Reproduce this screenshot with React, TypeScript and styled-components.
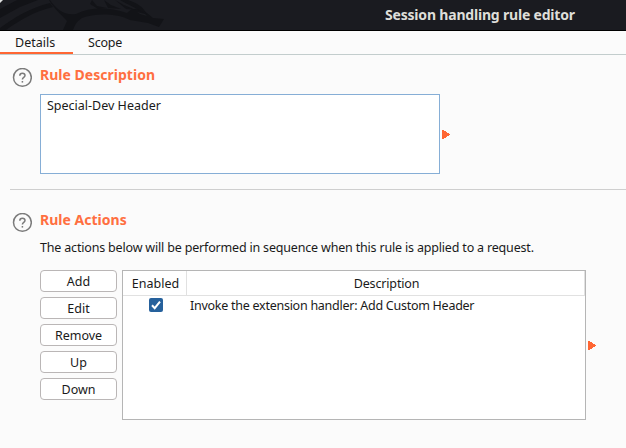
import React from "react";
import styled, { createGlobalStyle } from "styled-components";

const GlobalStyle = createGlobalStyle`
  * { box-sizing: border-box; }
  body {
    margin: 0;
    background: #fbfbfb;
    color: #1a1a1a;
    font: 12.5px/18px "Noto Sans", sans-serif;
    overflow: hidden;
  }
`;

const Window = styled.div`
  width: 626px;
  height: 448px;
  overflow: hidden;
  background: #fbfbfb;
`;

const TitleBar = styled.header`
  display: flex;
  align-items: flex-start;
  height: 31px;
  background: #1a1b20;
  border-bottom: 1px solid #000;
`;

const DragonArt = styled.svg`
  flex: none;
  display: block;
  width: 190px;
  height: 30px;
`;

const Title = styled.h1`
  margin: 5px 0 0 195px;
  font-size: 14px;
  line-height: 20px;
  font-weight: 700;
  letter-spacing: -0.19px;
  color: #deded9;
  white-space: nowrap;
`;

const Tabs = styled.nav`
  display: flex;
  height: 24px;
  border-bottom: 1px solid #c3cdcd;
`;

const Tab = styled.div<{ $active?: boolean }>`
  width: ${(p) => (p.$active ? 73 : 64)}px;
  height: 23px;
  padding: 3px 0 0 15px;
  border-bottom: 2px solid ${(p) => (p.$active ? "#ff6633" : "transparent")};
`;

const Section = styled.section<{ $first?: boolean }>`
  margin-left: 10px;
  padding-top: ${(p) => (p.$first ? 9 : 19)}px;
  height: ${(p) => (p.$first ? 135 : 258)}px;
  border-bottom: ${(p) => (p.$first ? "1px solid #cfcfcf" : "none")};
`;

const Heading = styled.div`
  display: flex;
  height: 30px;
`;

const HelpIcon = styled.svg`
  flex: none;
  width: 20px;
  height: 20px;
  margin: 4px 8px 0 2px;
`;

const HeadingText = styled.h2`
  margin: 0;
  font-size: 14px;
  line-height: 22px;
  font-weight: 700;
  letter-spacing: 0.02px;
  color: #ff6f40;
`;

const Row = styled.div`
  display: flex;
  margin-left: 30px;
`;

const DescriptionField = styled.div`
  width: 400px;
  height: 80px;
  padding: 2px 6px;
  background: #fff;
  border: 1px solid #86aed6;
`;

const Arrow = styled.svg`
  flex: none;
  align-self: center;
  width: 8px;
  height: 9px;
  margin: 1px 0 0 2px;
`;

const Text = styled.span<{ $spacing?: number }>`
  display: block;
  white-space: nowrap;
  letter-spacing: ${(p) => p.$spacing ?? 0}px;
`;

const Intro = styled.div`
  height: 31px;
  margin-left: 30px;
`;

const Buttons = styled.div`
  display: flex;
  flex-direction: column;
  gap: 5px;
  width: 77px;
  margin-right: 5px;
`;

const Button = styled.button`
  width: 77px;
  height: 22px;
  padding: 2px 0 0;
  border: 1px solid #bab6b6;
  border-radius: 4px;
  background: #fff;
  color: #1a1a1a;
  font: 12.5px/18px "Noto Sans", sans-serif;
`;

const Table = styled.div`
  width: 464px;
  height: 150px;
  background: #fff;
  border: 1px solid #b5b5b5;
`;

const TableHead = styled.div`
  display: grid;
  grid-template-columns: 64px 1fr;
  height: 25px;
  border-bottom: 1px solid #e1e1e1;
`;

const HeadCell = styled.div`
  display: flex;
  justify-content: center;
  padding: 4px 0 0 2px;
  border-right: 1px solid #e1e1e1;
`;

const TableRow = styled.div`
  display: grid;
  grid-template-columns: 67px 1fr;
  height: 20px;
  padding-top: 1px;
`;

const Checkbox = styled.svg`
  width: 14px;
  height: 14px;
  margin: 1px 0 0 26px;
`;

function Help() {
  return (
    <HelpIcon viewBox="0 0 20 20" fill="none" stroke="#7b7b7b">
      <circle cx="10.4" cy="9.4" r="8.9" strokeWidth="1.5" />
      <path d="M7.8 7.7C7.8 6.1 8.8 5.2 10.4 5.2S13 6.1 13 7.5C13 9.5 10.4 9.3 10.4 11.6" strokeWidth="1.5" />
      <path d="M10.4 13v1.6" strokeWidth="1.5" />
    </HelpIcon>
  );
}

function Marker() {
  return (
    <Arrow viewBox="0 0 8 9" shapeRendering="crispEdges">
      <path d="M0 0H2V1H4V2H5V3H7V4H8V5H7V6H5V7H4V8H2V9H0z" fill="#ff6633" />
    </Arrow>
  );
}

function Dragon() {
  return (
    <DragonArt viewBox="0 0 190 30">
      <g fill="#121317">
        <path d="M0 9L17 0H38L20 7 0 18z" />
        <path d="M0 28C15 17 30 8 50 3L53 7C33 12 20 20 6 30H0z" />
        <path d="M50 0C56 9 65 16 76 14C91 7 108 7 127 13C132 8 138 7 147 13L153 18 164 19 159 27 148 23 130 20C117 13 94 13 82 18C77 21 75 25 73 30H63L67 21C61 14 54 9 49 0z" />
        <path d="M92 0L97 6 107 8 98 9 90 4zM104 0L111 5 121 9 108 8zM115 0L124 5 136 10 126 9z" />
        <path d="M120 0H128C137 3 144 7 147 15C137 8 128 5 120 0z" />
      </g>
      <path d="M137 12L145 14 147 16 140 14z" fill="#1b1c21" />
      <path d="M0 0H3L0 3z" fill="#dfe1e0" />
    </DragonArt>
  );
}

const actions = ["Add", "Edit", "Remove", "Up", "Down"];

export default function App() {
  return (
    <Window>
      <GlobalStyle />
      <TitleBar>
        <Dragon />
        <Title>Session handling rule editor</Title>
      </TitleBar>
      <Tabs>
        <Tab $active><Text>Details</Text></Tab>
        <Tab><Text $spacing={-0.2}>Scope</Text></Tab>
      </Tabs>
      <Section $first>
        <Heading>
          <Help />
          <HeadingText>Rule Description</HeadingText>
        </Heading>
        <Row>
          <DescriptionField><Text>Special-Dev Header</Text></DescriptionField>
          <Marker />
        </Row>
      </Section>
      <Section>
        <Heading>
          <Help />
          <HeadingText>Rule Actions</HeadingText>
        </Heading>
        <Intro>
          <Text $spacing={-0.18}>The actions below will be performed in sequence when this rule is applied to a request.</Text>
        </Intro>
        <Row>
          <Buttons>
            {actions.map((name) => <Button key={name}>{name}</Button>)}
          </Buttons>
          <Table>
            <TableHead>
              <HeadCell><Text>Enabled</Text></HeadCell>
              <HeadCell><Text $spacing={-0.15}>Description</Text></HeadCell>
            </TableHead>
            <TableRow>
              <Checkbox viewBox="0 0 14 14">
                <rect width="14" height="14" rx="2" fill="#26619c" />
                <path d="M3 7.3L5.7 10.2 11 3.7" fill="none" stroke="#fff" strokeWidth="2" />
              </Checkbox>
              <Text $spacing={-0.26}>Invoke the extension handler: Add Custom Header</Text>
            </TableRow>
          </Table>
          <Marker />
        </Row>
      </Section>
    </Window>
  );
}
